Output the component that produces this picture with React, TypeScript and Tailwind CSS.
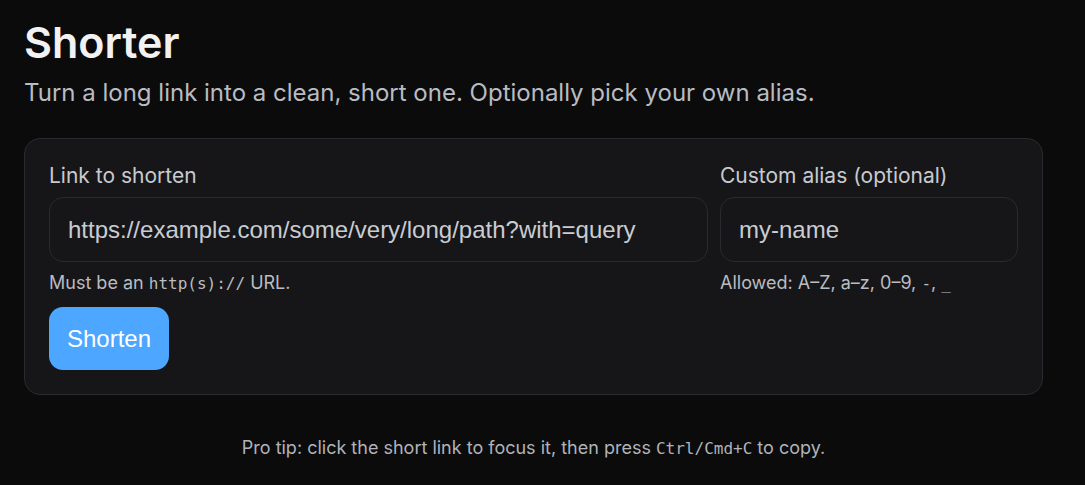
import React from "react";

export default function App() {
  const sans = "font-['Inter','Noto_Sans',sans-serif]";
  const mono = "font-['DejaVu_Sans_Mono','Liberation_Mono',monospace]";
  const arial = "font-['Liberation_Sans',Arial,sans-serif]";
  return (
    <div className={`min-h-[485px] bg-[#0b0b0c] ${sans}`}>
      <div className="px-6 pt-4 w-[1067px]">
        <h1 className="text-[43px] leading-[52px] font-semibold text-[#f2f2f2]">Shorter</h1>
        <p className="mt-[9px] text-[24px] leading-[32px] text-[#b9bcc2]">
          Turn a long link into a clean, short one. Optionally pick your own alias.
        </p>
        <div className="mt-[29px] rounded-[16px] border border-[#2a2a2e] bg-[#161618] px-6 pt-[23px] pb-6">
          <div className="grid grid-cols-[1fr_298px] gap-x-3">
            <div className="flex flex-col">
              <label className="text-[21px] leading-[28px] text-[#c8cad0]">Link to shorten</label>
              <div className="mt-[7px] h-[65px] rounded-[14px] border border-[#2a2a2e] bg-[#161618] flex items-center px-[18px]">
                <span className={`${arial} text-[24px] text-[#c9ccd2]`}>
                  https://example.com/some/very/long/path?with=query
                </span>
              </div>
              <p className="mt-[9px] text-[18px] leading-[24px] text-[#b9bcc2]">
                Must be an <code className={`${mono} text-[16px]`}>http(s)://</code> URL.
              </p>
            </div>
            <div className="flex flex-col">
              <label className="text-[21px] leading-[28px] text-[#c8cad0]">Custom alias (optional)</label>
              <div className="mt-[7px] h-[65px] rounded-[14px] border border-[#2a2a2e] bg-[#161618] flex items-center px-[18px]">
                <span className={`${arial} text-[24px] text-[#c9ccd2]`}>my-name</span>
              </div>
              <p className="mt-[9px] text-[18px] leading-[24px] text-[#b9bcc2]">
                Allowed: A–Z, a–z, 0–9, <code className={`${mono} text-[16px]`}>-</code>,{" "}
                <code className={`${mono} text-[16px]`}>_</code>
              </p>
            </div>
          </div>
          <button className={`mt-[11px] h-[63px] w-[120px] rounded-[14px] bg-[#4da6ff] text-white ${arial} text-[24px]`}>
            Shorten
          </button>
        </div>
        <p className="mt-[41px] text-center text-[18px] leading-[24px] text-[#b0b3b9]">
          Pro tip: click the short link to focus it, then press{" "}
          <code className={`${mono} text-[16px]`}>Ctrl/Cmd+C</code> to copy.
        </p>
      </div>
    </div>
  );
}
